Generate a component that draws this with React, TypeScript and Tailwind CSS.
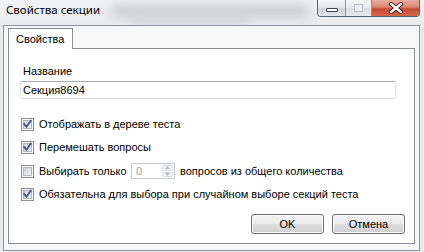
import React from "react";

function CheckBox({ checked }: { checked: boolean }) {
  return (
    <svg width="13" height="13" viewBox="0 0 13 13" className="shrink-0">
      <defs>
        <linearGradient id="cbfill" x1="0" y1="0" x2="1" y2="1">
          <stop offset="0" stopColor="#c9cdd3" />
          <stop offset="1" stopColor="#f8f9fa" />
        </linearGradient>
      </defs>
      <rect x="0.5" y="0.5" width="12" height="12" fill="#f6f6f6" stroke="#8e8f8f" />
      <rect x="2.5" y="2.5" width="8" height="8" fill="url(#cbfill)" stroke="#b4b8be" />
      {checked && (
        <path
          d="M3.2 6.2 L5.4 8.8 L9.8 2.8"
          fill="none"
          stroke="#44598a"
          strokeWidth="1.9"
          strokeLinecap="square"
        />
      )}
    </svg>
  );
}

function CheckRow({ checked, children }: { checked: boolean; children: React.ReactNode }) {
  return (
    <div className="ml-[1px] flex h-[13px] items-center">
      <CheckBox checked={checked} />
      <span className="ml-[5px] whitespace-nowrap leading-[13px]">{children}</span>
    </div>
  );
}

function Btn({ children }: { children: React.ReactNode }) {
  return (
    <div className="flex h-[20px] w-[73px] items-center justify-center rounded-[3px] border border-[#707070] bg-[linear-gradient(to_bottom,#f3f3f3_0%,#ebebeb_48%,#dddddd_52%,#cfcfcf_100%)] shadow-[inset_0_0_0_1px_#fbfbfb] leading-[13px] text-black">
      {children}
    </div>
  );
}

export default function App() {
  return (
    <div className="relative h-[252px] w-[424px] overflow-hidden bg-[#e9ebed] font-['Liberation_Sans',Arial,sans-serif] text-[11px] text-black">
      {/* blurred aero glass background */}
      <div className="pointer-events-none absolute left-[110px] top-[4px] h-[12px] w-[200px] rounded-full bg-[#9aa0a8] opacity-60 blur-[6px]" />
      <div className="pointer-events-none absolute left-[130px] top-[17px] h-[6px] w-[120px] rounded-full bg-[#c0c4c9] opacity-60 blur-[4px]" />
      <div className="pointer-events-none absolute left-[0px] top-[0px] h-[25px] w-[424px] bg-[linear-gradient(to_bottom,rgba(255,255,255,0.35),rgba(255,255,255,0))]" />

      {/* caption buttons */}
      <div className="absolute right-[4px] top-0 flex h-[17px] w-[103px] overflow-hidden rounded-b-[4px] border border-t-0 border-[#5a626d]">
        <div className="flex h-full w-[28px] items-center justify-center border-r border-[#8a929c] bg-[linear-gradient(to_bottom,#f2f4f7_0%,#e2e6eb_50%,#cfd5dd_51%,#dfe4ea_100%)]">
          <div className="mt-[3px] h-[4px] w-[12px] rounded-[1px] border border-[#3c4657] bg-white" />
        </div>
        <div className="flex h-full w-[26px] items-center justify-center border-r border-[#8a929c] bg-[linear-gradient(to_bottom,#f2f4f7_0%,#e6e9ee_50%,#dadfe5_51%,#e6e9ee_100%)]">
          <div className="h-[8px] w-[9px] border border-[#b9bfc7] bg-[#eef0f3]" />
        </div>
        <div className="flex h-full flex-1 items-center justify-center bg-[linear-gradient(to_bottom,#eab0a2_0%,#d98472_45%,#c84a33_55%,#d8664a_100%)]">
          <svg width="16" height="12" viewBox="0 0 16 12">
            <path d="M3 2 L13 10 M13 2 L3 10" stroke="#4a1f1a" strokeWidth="4.2" strokeLinecap="round" />
            <path d="M3 2 L13 10 M13 2 L3 10" stroke="#ffffff" strokeWidth="2.4" strokeLinecap="round" />
          </svg>
        </div>
      </div>

      {/* title bar */}
      <div className="relative flex h-[25px] items-start pl-[6px] pt-[2px]">
        <span className="font-['Noto_Sans',sans-serif] text-[11.5px] leading-[16px] text-black">Свойства секции</span>
      </div>

      {/* client area */}
      <div className="relative ml-[3px] flex h-[226px] w-[417px] flex-col border border-[#8d9199] bg-[#f8f8f8] px-[4px] pb-[6px] pt-[2px]">
        {/* tab strip */}
        <div className="flex h-[20px]">
          <div className="relative z-10 -mb-px flex h-[21px] w-[65px] items-center border border-b-0 border-[#898c95] bg-white pl-[7px]">
            <span className="leading-[13px]">Свойства</span>
          </div>
        </div>
        {/* tab page */}
        <div className="flex h-[196px] w-[407px] flex-col border border-[#898c95] bg-white pl-[11px]">
          <div className="ml-[3px] mt-[16px] leading-[13px]">Название</div>
          <div className="mt-[3px] flex h-[18px] w-[376px] items-center rounded-[2px] border border-[#dfe3e9] border-t-[#abadb3] bg-white pl-[2px]">
            <span className="leading-[13px]">Секция8694</span>
          </div>

          <div className="mt-[19px]">
            <CheckRow checked>Отображать в дереве теста</CheckRow>
          </div>
          <div className="mt-[10px]">
            <CheckRow checked>Перемешать вопросы</CheckRow>
          </div>
          <div className="ml-[1px] mt-[9px] flex h-[16px] items-center">
            <CheckBox checked={false} />
            <span className="ml-[5px] w-[92px] whitespace-nowrap leading-[13px]">Выбирать только</span>
            <div className="flex h-[16px] w-[44px] border border-[#c6cad0] bg-white">
              <div className="flex flex-1 items-center pl-[4px] leading-[13px] text-[#a3a3a3]">0</div>
              <div className="flex w-[13px] flex-col gap-px p-px">
                <div className="flex flex-1 items-center justify-center rounded-[2px] border border-[#d9dce0] bg-[#f4f5f6]">
                  <svg width="5" height="3" viewBox="0 0 5 3"><path d="M0 3 L2.5 0 L5 3 Z" fill="#b0b4ba" /></svg>
                </div>
                <div className="flex flex-1 items-center justify-center rounded-[2px] border border-[#d9dce0] bg-[#f4f5f6]">
                  <svg width="5" height="3" viewBox="0 0 5 3"><path d="M0 0 L2.5 3 L5 0 Z" fill="#b0b4ba" /></svg>
                </div>
              </div>
            </div>
            <span className="ml-[5px] whitespace-nowrap leading-[13px]">вопросов из общего количества</span>
          </div>
          <div className="mt-[9px]">
            <CheckRow checked>Обязательна для выбора при случайном выборе секций теста</CheckRow>
          </div>

          <div className="mt-[13px] flex justify-end gap-[8px] pr-[9px]">
            <Btn>OK</Btn>
            <Btn>Отмена</Btn>
          </div>
        </div>
      </div>
    </div>
  );
}
